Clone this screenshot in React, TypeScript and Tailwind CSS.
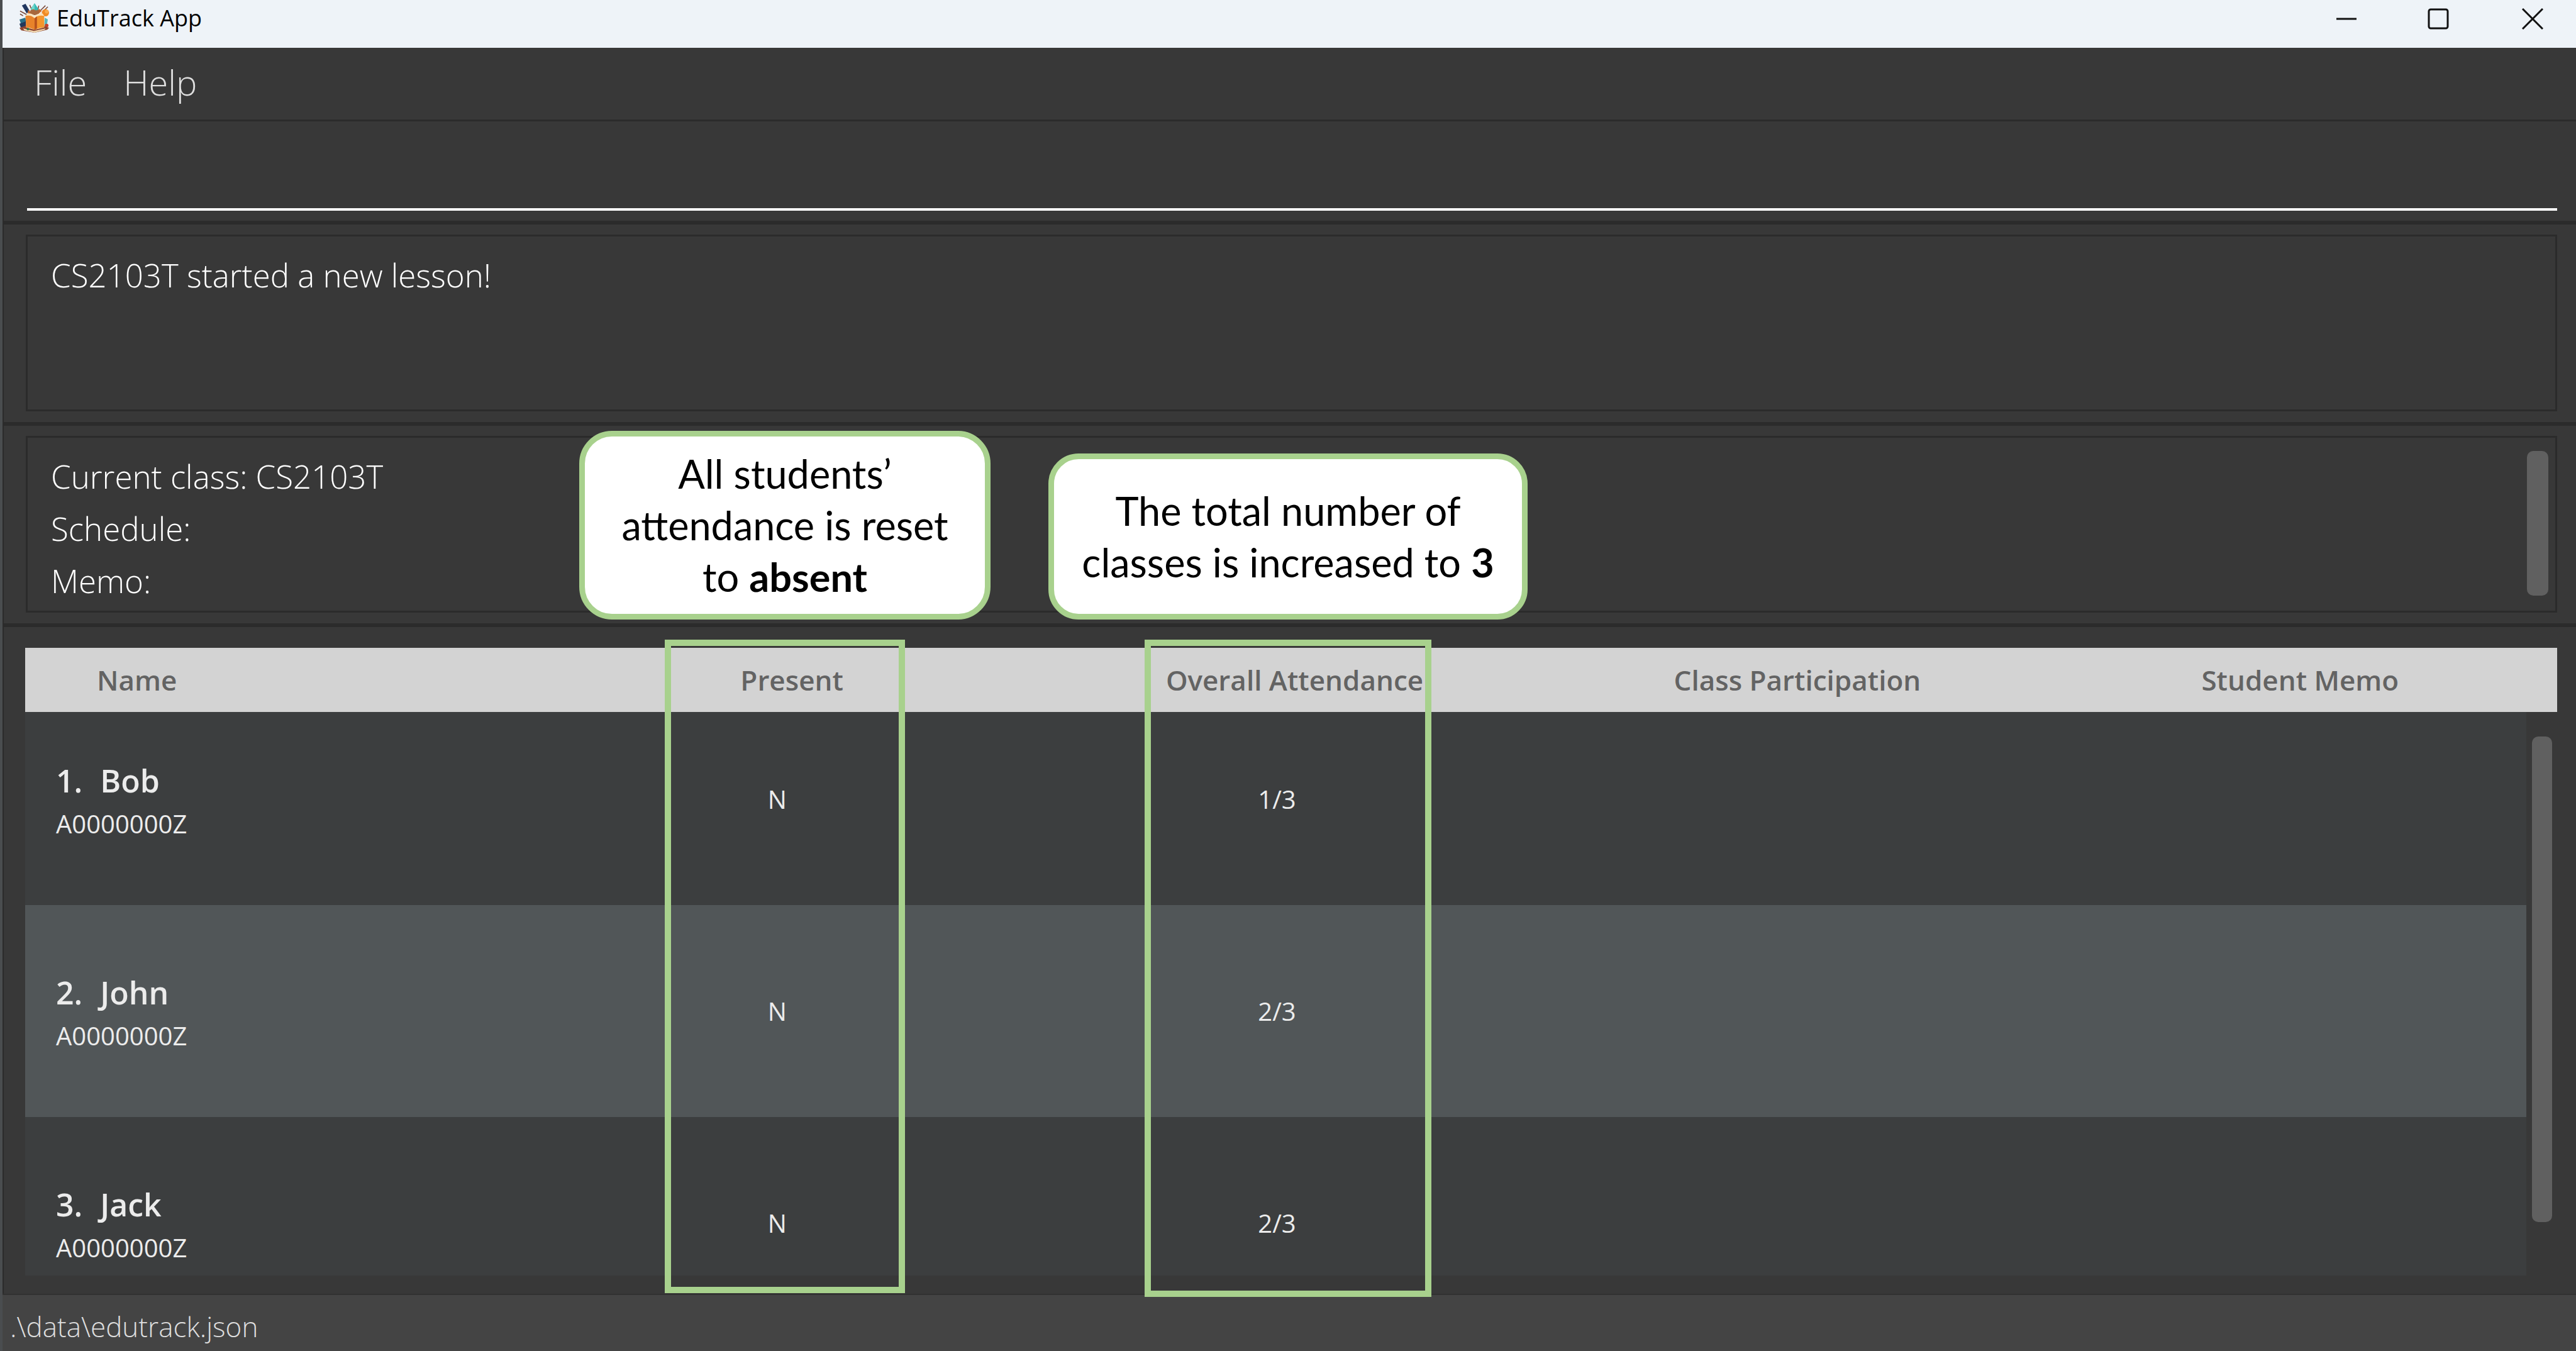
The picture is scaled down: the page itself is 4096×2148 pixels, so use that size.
import type { ReactNode } from "react";

const students = [
  { name: "Bob", id: "A0000000Z", present: "N", attendance: "1/3" },
  { name: "John", id: "A0000000Z", present: "N", attendance: "2/3" },
  { name: "Jack", id: "A0000000Z", present: "N", attendance: "2/3" },
];

const columns = ["Present", "Overall Attendance", "Class Participation", "Student Memo"];

function AppIcon() {
  return (
    <svg viewBox="0 0 50 50" className="size-12" aria-hidden="true">
      <path d="M5 4 11 1 18 13 13 17Z" fill="#20365f" />
      <path d="M2 13 13 19M7 21 2 18M36 12 44 4M39 15 48 6M31 13 33 4M21 10 18 3" stroke="#7b4a3a" strokeWidth="1.6" />
      <path d="M26 0 32 9 30 18H21L20 9Z" fill="#35b9b4" />
      <path d="M26 1V17L20 9Z" fill="#6fd8cc" />
      <path d="M15 11 22 17 15 19ZM33 9 38 13 32 18Z" fill="#c9682a" />
      <path d="M19 12 24 10 28 12 34 11 33 18 26 20 18 17Z" fill="#a8683c" />
      <circle cx="44" cy="16" r="6" fill="#f08a24" />
      <circle cx="46" cy="14" r="3" fill="#f9a94a" />
      <path d="M1 27 11 24 13 38 4 36Z" fill="#2b6f86" />
      <path d="M1 34 12 30V42L3 40Z" fill="#23395b" />
      <path d="M43 24 48 27 46 38 42 38Z" fill="#58b6bd" />
      <circle cx="46" cy="37" r="3" fill="#c8402d" />
      <path d="M1 41 13 37H40L50 41 47 44 26 49 4 45Z" fill="#8d4530" />
      <path d="M7 42 25 46 44 42 43 44 26 49 9 45Z" fill="#f0d7b0" />
      <path d="M11 21 14 17Q22 16 26 22 31 16 39 17L42 21V40L26 44 12 40Z" fill="#fbe3bb" />
      <path d="M11 21Q20 19 26 25V44Q19 40 12 40Z" fill="#e8832a" />
      <path d="M42 21Q32 19 26 25V44Q34 40 42 40Z" fill="#f4952c" />
      <path d="M26 25V44L30 42V22Z" fill="#b8521c" />
      <circle cx="15" cy="43" r="2" fill="#2f7d4b" />
    </svg>
  );
}

function TitleBar() {
  return (
    <header className="flex h-[76px] items-start justify-between bg-[#eef3f8]">
      <div className="flex items-center gap-3 pl-[26px]">
        <AppIcon />
        <h1 className="text-[36px] leading-[58px] text-black">EduTrack App</h1>
      </div>
      <div className="flex">
        <button aria-label="Minimize" className="flex h-[60px] w-[146px] items-center justify-center">
          <svg viewBox="0 0 34 34" className="size-[34px]">
            <path d="M1 17H33" stroke="#111" strokeWidth="3" />
          </svg>
        </button>
        <button aria-label="Maximize" className="flex h-[60px] w-[146px] items-center justify-center">
          <svg viewBox="0 0 34 34" className="size-[34px]" fill="none">
            <rect x="2" y="2" width="30" height="30" rx="3" stroke="#111" strokeWidth="3" />
          </svg>
        </button>
        <button aria-label="Close" className="ml-2 flex h-[60px] w-[138px] items-center justify-center">
          <svg viewBox="0 0 34 34" className="size-[34px]">
            <path d="M1 1 33 33M33 1 1 33" stroke="#111" strokeWidth="3" />
          </svg>
        </button>
      </div>
    </header>
  );
}

function Callout({ className, children }: { className: string; children: ReactNode }) {
  return (
    <div
      className={`absolute bottom-1.5 z-10 border-[9px] border-[#a8d18d] bg-white text-center font-[Lato,sans-serif] text-[63px] leading-[82px] text-black ${className}`}
    >
      {children}
    </div>
  );
}

function Panel({ children }: { children: ReactNode }) {
  return (
    <section className="relative border-b-[6px] border-[#2b2b2b] pt-4 pr-[30px] pb-[17px] pl-[35px]">
      {children}
    </section>
  );
}

function StudentTable() {
  return (
    <section className="relative flex min-h-0 flex-1 flex-col pt-[33px] pr-[30px] pb-[29px] pl-[34px]">
      <table className="flex min-h-0 flex-1 flex-col">
        <thead className="z-[1] block bg-[#d3d3d3] text-[44px] leading-[102px] text-[#636363]">
          <tr className="grid grid-cols-5 pr-[9px] pl-5">
            <th className="pl-[94px] text-left font-semibold">Name</th>
            {columns.map((c) => (
              <th key={c} className="text-center font-semibold">
                {c}
              </th>
            ))}
          </tr>
        </thead>
        <tbody className="mr-[49px] -mt-[30px] block min-h-0 flex-1 overflow-hidden bg-[#3c3e3f] text-[40px] text-[#ececec]">
          {students.map((s, i) => (
            <tr key={i} className="grid h-[337px] grid-cols-5 items-center pl-1 even:bg-[#515658]">
              <td className="pt-1.5 pl-[45px]">
                <div className="flex gap-7 text-[50px] leading-[72px] font-semibold">
                  <span>{i + 1}.</span>
                  <span>{s.name}</span>
                </div>
                <div className="leading-[66px]">{s.id}</div>
              </td>
              <td className="text-center">{s.present}</td>
              <td className="text-center">{s.attendance}</td>
              <td />
              <td />
            </tr>
          ))}
        </tbody>
      </table>
      <div className="absolute top-[174px] right-[38px] bottom-[114px] w-8 rounded-[10px] bg-[#606060]" />
      <div className="absolute top-5 bottom-px left-[1051px] z-10 w-[382px] border-[10px] border-[#a8d18d]" />
      <div className="absolute top-5 -bottom-[5px] left-[1814px] z-10 w-[456px] border-[10px] border-[#a8d18d]" />
    </section>
  );
}

export default function App() {
  return (
    <div className="flex h-screen flex-col bg-[#383838] font-['Open_Sans',sans-serif]">
      <div className="flex min-h-0 flex-1 border-l-4 border-[#4a4d4f]">
        <div className="flex min-w-0 flex-1 flex-col">
          <TitleBar />
          <div className="flex min-h-0 flex-1 flex-col border-l-2 border-[#2b2b2b]">
            <nav className="flex h-[117px] items-start gap-[58px] border-b-[3px] border-[#2b2b2b] pt-3.5 pl-12 text-[56px] leading-[80px] font-light text-[#dedede]">
              <button>File</button>
              <button>Help</button>
            </nav>
            <div className="border-b-[6px] border-[#2b2b2b] pr-[30px] pb-4 pl-[37px]">
              <input
                aria-label="Command"
                className="block h-[142px] w-full border-b-4 border-white bg-transparent text-[51px] font-light text-white outline-none"
              />
            </div>
            <Panel>
              <div className="h-[281px] border-[3px] border-[#2b2b2b] px-[37px] pt-5 text-[51px] leading-[83px] font-light text-white">
                CS2103T started a new lesson!
              </div>
            </Panel>
            <Panel>
              <div className="relative h-[281px] border-[3px] border-[#2b2b2b] px-[37px] pt-5 text-[51px] leading-[83px] font-light text-white">
                <p>Current class: CS2103T</p>
                <p>Schedule:</p>
                <p>Memo:</p>
                <div className="absolute top-[21px] right-[11px] h-[230px] w-[34px] rounded-[10px] bg-[#606060]" />
              </div>
              <Callout className="left-[915px] w-[654px] rounded-[52px] py-[18px]">
                All students’
                <br />
                attendance is reset
                <br />
                to <b>absent</b>
              </Callout>
              <Callout className="left-[1661px] w-[762px] rounded-[48px] py-[41px]">
                The total number of
                <br />
                classes is increased to <b>3</b>
              </Callout>
            </Panel>
            <StudentTable />
          </div>
          <footer className="h-[91px] border-t-2 border-[#323232] bg-[#444444] pl-3 text-[44px] leading-[100px] font-light text-[#dedede]">
            .\data\edutrack.json
          </footer>
        </div>
      </div>
    </div>
  );
}
